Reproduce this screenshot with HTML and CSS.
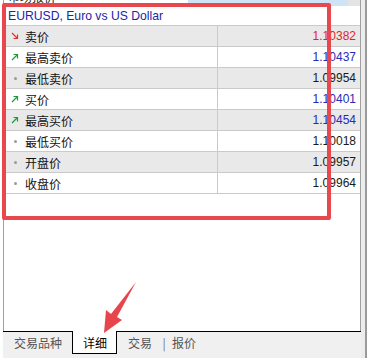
FILE: index.html
```html
<!DOCTYPE html>
<html>
<head>
<meta charset="utf-8">
<link rel="stylesheet" href="styles.css">
</head>
<body>
<div class="app">
  <div class="main">
    <div class="panel">
      <div class="header">
        <div class="header-title">市场报价</div>
        <div class="header-fill"></div>
        <div class="header-end"></div>
      </div>
      <div class="title-row">EURUSD, Euro vs US Dollar</div>
      <div class="rows">
        <div class="row alt">
          <div class="name"><span class="ic"><svg width="8" height="8" viewBox="0 0 8 8"><path d="M1 1 L6.5 6.5 M6.5 2.5 V6.5 H2.5" fill="none" stroke="#d9352b" stroke-width="1.2"/></svg></span>卖价</div>
          <div class="val red">1.10382</div>
        </div>
        <div class="row">
          <div class="name"><span class="ic"><svg width="8" height="8" viewBox="0 0 8 8"><path d="M1 7 L6.5 1.5 M2.5 1.5 H6.5 V5.5" fill="none" stroke="#1f9a3a" stroke-width="1.2"/></svg></span>最高卖价</div>
          <div class="val blue">1.10437</div>
        </div>
        <div class="row alt">
          <div class="name"><span class="ic"><span class="dot"></span></span>最低卖价</div>
          <div class="val">1.09954</div>
        </div>
        <div class="row">
          <div class="name"><span class="ic"><svg width="8" height="8" viewBox="0 0 8 8"><path d="M1 7 L6.5 1.5 M2.5 1.5 H6.5 V5.5" fill="none" stroke="#1f9a3a" stroke-width="1.2"/></svg></span>买价</div>
          <div class="val blue">1.10401</div>
        </div>
        <div class="row alt">
          <div class="name"><span class="ic"><svg width="8" height="8" viewBox="0 0 8 8"><path d="M1 7 L6.5 1.5 M2.5 1.5 H6.5 V5.5" fill="none" stroke="#1f9a3a" stroke-width="1.2"/></svg></span>最高买价</div>
          <div class="val blue">1.10454</div>
        </div>
        <div class="row">
          <div class="name"><span class="ic"><span class="dot"></span></span>最低买价</div>
          <div class="val">1.10018</div>
        </div>
        <div class="row alt">
          <div class="name"><span class="ic"><span class="dot"></span></span>开盘价</div>
          <div class="val">1.09957</div>
        </div>
        <div class="row">
          <div class="name"><span class="ic"><span class="dot"></span></span>收盘价</div>
          <div class="val">1.09964</div>
        </div>
      </div>
    </div>
    <div class="tabs">
      <div class="tab first">交易品种</div>
      <div class="tab active">详细</div>
      <div class="tab trade">交易</div>
      <div class="sep">|</div>
      <div class="tab quote">报价</div>
    </div>
  </div>
  <div class="scroll"></div>
  <div class="frame"></div>
  <svg class="arrow" width="40" height="56" viewBox="100 280 40 56">
    <polygon points="136,282 117,317 122,320 104,333 106,310 111,314" fill="#e8444b"/>
  </svg>
</div>
</body>
</html>
```
FILE: styles.css
```css
html, body {
  margin: 0;
  padding: 0;
  background: #ffffff;
}
.app {
  position: relative;
  width: 368px;
  height: 358px;
  display: flex;
  overflow: hidden;
  font-family: "Liberation Sans", "Noto Sans CJK SC", sans-serif;
  font-size: 12px;
}
.main {
  width: 361px;
  display: flex;
  flex-direction: column;
  padding-left: 3px;
  box-sizing: border-box;
}
.panel {
  flex: 1;
  border-left: 1px solid #a0a0a0;
  border-right: 1px solid #a0a0a0;
  display: flex;
  flex-direction: column;
}
.header {
  height: 6px;
  display: flex;
  overflow: hidden;
}
.header-title {
  width: 180px;
  background: #ffffff;
  color: #222;
  font-family: "Noto Sans CJK SC", sans-serif;
  line-height: 6px;
  padding-left: 4px;
  font-size: 12px;
  margin-top: -6px;
  height: 12px;
  white-space: nowrap;
}
.header-fill {
  flex: 1;
  background: #cfe3f6;
}
.header-end {
  width: 12px;
  background: #e4e4e4;
}
.title-row {
  height: 19px;
  line-height: 20px;
  padding-left: 4px;
  color: #2323a8;
  font-family: "Liberation Sans", sans-serif;
  font-size: 12.2px;
  white-space: nowrap;
}
.rows {
  border-top: 1px solid #cacaca;
}
.row {
  display: flex;
  height: 20px;
  border-bottom: 1px solid #cacaca;
  background: #ffffff;
}
.row.alt {
  background: #e9e9e9;
}
.name {
  width: 213px;
  border-right: 1px solid #cacaca;
  display: flex;
  align-items: center;
  color: #111;
  font-family: "Noto Sans CJK SC", sans-serif;
  font-size: 12px;
  white-space: nowrap;
}
.ic {
  width: 21px;
  display: flex;
  align-items: center;
  justify-content: center;
  padding-left: 1px;
  box-sizing: border-box;
}
.dot {
  width: 3px;
  height: 3px;
  border-radius: 50%;
  background: #9a9a9a;
}
.val {
  flex: 1;
  text-align: right;
  padding-right: 4px;
  line-height: 20px;
  color: #1a1a1a;
  font-family: "Liberation Sans", sans-serif;
}
.val.red { color: #e0281f; }
.val.blue { color: #2a2ab8; }
.tabs {
  height: 26px;
  border-top: 1px solid #000;
  background: #f0f0f0;
  display: flex;
  align-items: flex-start;
  font-family: "Noto Sans CJK SC", sans-serif;
  font-size: 12px;
  color: #555;
  white-space: nowrap;
}
.tab {
  height: 20px;
  line-height: 21px;
  padding: 0 12px;
  flex: none;
}
.tab.first {
  width: 69px;
  box-sizing: border-box;
  padding: 0 0 0 11px;
}
.tab.active {
  margin-top: -1px;
  height: 21px;
  background: #ffffff;
  color: #000;
  border: 1px solid #000;
  border-top: none;
  padding: 1px 9px 0 10px;
}
.tab.trade {
  padding: 0 8px 0 11px;
}
.sep {
  width: 8px;
  text-align: center;
  line-height: 21px;
  color: #777;
  flex: none;
}
.tab.quote {
  padding: 0 0 0 4px;
}
.scroll {
  flex: 1;
  background: #ececec;
  border-right: 2px solid #9a9a9a;
  margin-right: 1px;
}
.frame {
  position: absolute;
  left: 2px;
  top: 3px;
  width: 329px;
  height: 217px;
  box-sizing: border-box;
  border: 4px solid #e8474e;
  border-radius: 2px;
}
.arrow {
  position: absolute;
  left: 100px;
  top: 280px;
}
```
